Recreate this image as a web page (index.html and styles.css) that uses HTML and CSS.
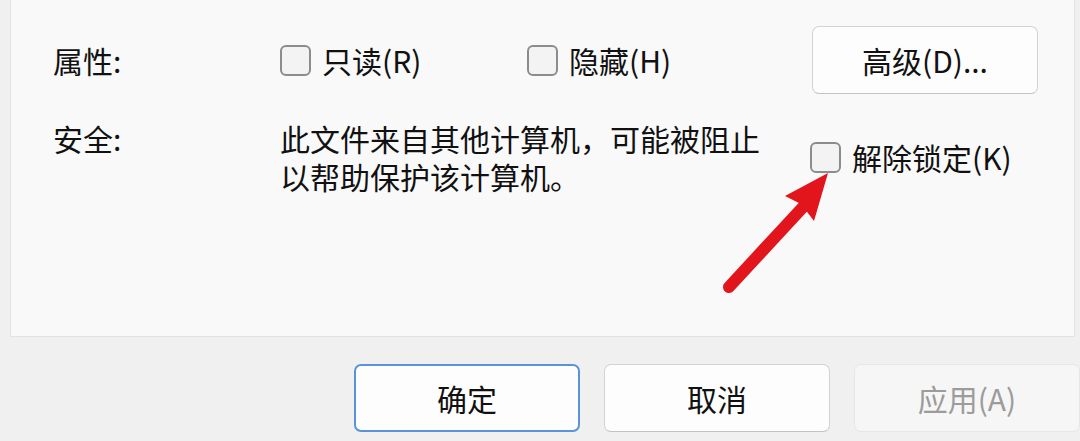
FILE: index.html
```html
<!DOCTYPE html>
<html lang="zh-CN">
<head>
    <meta charset="UTF-8">
    <title>文件属性</title>
    <link rel="stylesheet" href="styles.css">
</head>
<body>
    <div class="dialog">
        <div class="panel">
            <div class="row row-attrs">
                <div class="label">属性:</div>
                <label class="check"><span class="box"></span>只读(R)</label>
                <label class="check"><span class="box"></span>隐藏(H)</label>
                <button class="btn">高级(D)...</button>
            </div>
            <div class="row row-security">
                <div class="label">安全:</div>
                <div class="desc">此文件来自其他计算机，可能被阻止<br>以帮助保护该计算机。</div>
                <label class="check"><span class="box"></span>解除锁定(K)</label>
            </div>
        </div>

        <div class="footer">
            <button class="btn btn-default">确定</button>
            <button class="btn">取消</button>
            <button class="btn" disabled>应用(A)</button>
        </div>
    </div>

    <!-- 红色箭头标注 -->
    <svg class="arrow" width="1080" height="441" viewBox="0 0 1080 441">
        <line x1="729" y1="287" x2="804" y2="206" stroke="#e2141c" stroke-width="12" stroke-linecap="round"/>
        <polygon points="828,173 785,196 801,204 814,221" fill="#e2141c"/>
    </svg>
</body>
</html>
```

FILE: styles.css
```css
body {
    margin: 0;
    background-color: #f0f0f0;
    font-family: "Noto Sans CJK SC", sans-serif;
    color: #111;
    font-size: 30px;
}
.dialog {
    width: 1080px;
    height: 441px;
    overflow: hidden;
}
.panel {
    margin-left: 10px;
    width: 1065px;
    height: 337px;
    background-color: #f9f9f9;
    border: 1px solid #e3e3e3;
    border-top: none;
    box-sizing: border-box;
}
.row {
    display: grid;
    grid-template-columns: 227px 247px 285px 227px;
    padding-left: 42px;
    align-items: center;
}
.row-attrs {
    padding-top: 26px;
}
.row-security {
    margin-top: 25px;
}
.label {
    line-height: 38px;
}
.row-security .label {
    align-self: start;
}
.desc {
    grid-column: 2 / span 2;
    line-height: 38px;
}
.check {
    display: flex;
    align-items: center;
    gap: 11px;
    line-height: 38px;
}
.row-security .check {
    margin-left: -2px;
}
.box {
    width: 31px;
    height: 31px;
    box-sizing: border-box;
    border: 2px solid #8c8c8c;
    border-radius: 6px;
    background-color: #f3f3f3;
}
.btn {
    width: 226px;
    height: 68px;
    font-family: inherit;
    font-size: 30px;
    color: #111;
    background-color: #fdfdfd;
    border: 1px solid #d3d3d3;
    border-bottom-color: #c2c2c2;
    border-radius: 7px;
    padding: 0;
}
.btn-default {
    border: 2px solid #5a93da;
}
.btn:disabled {
    color: #9c9c9c;
    background-color: #f6f6f6;
    border-color: #e6e6e6;
}
.footer {
    display: flex;
    justify-content: flex-end;
    gap: 24px;
    margin-top: 27px;
}
.arrow {
    position: absolute;
    left: 0;
    top: 0;
    pointer-events: none;
}
```
